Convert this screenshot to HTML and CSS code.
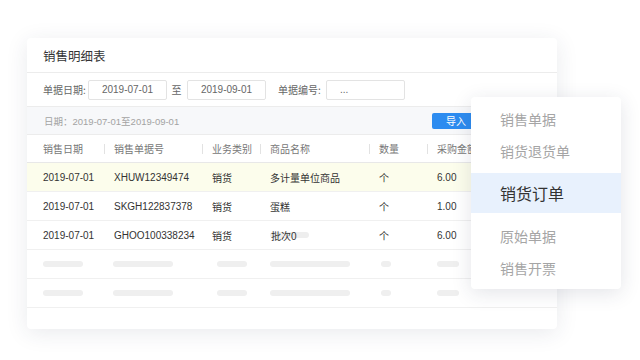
FILE: index.html
```html
<!DOCTYPE html>
<html lang="zh-CN">
<head>
<meta charset="utf-8">
<title>销售明细表</title>
<link rel="stylesheet" href="styles.css">
</head>
<body>
<div class="stage">
  <div class="card">
    <div class="title">销售明细表</div>
    <div class="filters">
      <span class="label">单据日期:</span>
      <div class="input center">2019-07-01</div>
      <span class="to">至</span>
      <div class="input center">2019-09-01</div>
      <span class="label label2">单据编号:</span>
      <div class="input left">...</div>
    </div>
    <div class="band">
      <span class="range">日期：2019-07-01至2019-09-01</span>
      <button class="import">导入</button>
    </div>
    <div class="row head">
      <div class="cell">销售日期</div>
      <div class="cell sep">销售单据号</div>
      <div class="cell sep">业务类别</div>
      <div class="cell sep">商品名称</div>
      <div class="cell sep">数量</div>
      <div class="cell sep">采购金额</div>
    </div>
    <div class="row hl">
      <div class="cell">2019-07-01</div>
      <div class="cell">XHUW12349474</div>
      <div class="cell">销货</div>
      <div class="cell">多计量单位商品</div>
      <div class="cell">个</div>
      <div class="cell">6.00</div>
    </div>
    <div class="row">
      <div class="cell">2019-07-01</div>
      <div class="cell">SKGH122837378</div>
      <div class="cell">销货</div>
      <div class="cell">蛋糕</div>
      <div class="cell">个</div>
      <div class="cell">1.00</div>
    </div>
    <div class="row">
      <div class="cell">2019-07-01</div>
      <div class="cell">GHOO100338234</div>
      <div class="cell">销货</div>
      <div class="cell"><span class="pilltext"><span class="pill"></span><span class="ptxt">批次0</span></span></div>
      <div class="cell">个</div>
      <div class="cell">6.00</div>
    </div>
    <div class="row sk">
      <div class="cell"><span class="bar w40"></span></div>
      <div class="cell"><span class="bar w60"></span></div>
      <div class="cell"><span class="bar w30 in5"></span></div>
      <div class="cell"><span class="bar w80"></span></div>
      <div class="cell"><span class="bar w10 in2"></span></div>
      <div class="cell"><span class="bar w22"></span></div>
    </div>
    <div class="row sk">
      <div class="cell"><span class="bar w40"></span></div>
      <div class="cell"><span class="bar w60"></span></div>
      <div class="cell"><span class="bar w30 in5"></span></div>
      <div class="cell"><span class="bar w80"></span></div>
      <div class="cell"><span class="bar w10 in2"></span></div>
      <div class="cell"><span class="bar w22"></span></div>
    </div>
  </div>

  <div class="menu">
    <div class="item">销售单据</div>
    <div class="item">销货退货单</div>
    <div class="item active">销货订单</div>
    <div class="item gap">原始单据</div>
    <div class="item">销售开票</div>
  </div>
</div>
</body>
</html>
```

FILE: styles.css
```css
* { box-sizing: border-box; }
html, body { margin: 0; padding: 0; background: #ffffff; }
body {
  font-family: "Liberation Sans", "Noto Sans CJK SC", sans-serif;
  width: 640px;
  height: 360px;
  overflow: hidden;
}
.stage {
  position: relative;
  padding: 38px 0 0 27px;
}
.card {
  width: 530px;
  height: 291px;
  background: #fff;
  border-radius: 4px;
  box-shadow: 0 4px 22px rgba(40, 50, 80, 0.10);
  overflow: hidden;
}
.title {
  height: 35px;
  padding-left: 16px;
  display: flex;
  align-items: center;
  font-size: 12.5px;
  color: #333;
  border-bottom: 1px solid #ececec;
  font-family: "Noto Sans CJK SC", sans-serif;
}
.filters {
  height: 34px;
  display: flex;
  align-items: center;
  padding-left: 16px;
  border-bottom: 1px solid #ececec;
  font-size: 10px;
  color: #666;
}
.label { width: 45px; font-family: "Noto Sans CJK SC", sans-serif; }
.label2 { margin-left: 12px; width: 48px; }
.to { width: 21px; text-align: center; margin: 0 0 0 -1px; font-family: "Noto Sans CJK SC", sans-serif; }
.input {
  width: 79px;
  height: 20px;
  border: 1px solid #e3e3e3;
  border-radius: 2px;
  display: flex;
  align-items: center;
  color: #666;
  font-size: 10px;
}
.input.center { justify-content: center; }
.input.left { padding-left: 13px; }
.band {
  height: 28px;
  background: #f7f8fa;
  border-bottom: 1px solid #ececec;
  display: flex;
  align-items: center;
  padding-left: 17px;
  font-size: 9.5px;
  color: #a3a3a3;
}
.import {
  margin-left: auto;
  margin-right: 77px;
  width: 48px;
  height: 16px;
  border: 0;
  border-radius: 2px;
  background: #2d8cf0;
  color: #fff;
  font-family: "Noto Sans CJK SC", sans-serif;
  font-size: 10px;
  padding: 0;
  line-height: 16px;
}
.row {
  display: grid;
  grid-template-columns: 71px 98px 58px 109px 58px 1fr;
  padding-left: 16px;
  height: 29px;
  align-items: center;
  border-bottom: 1px solid #f0f0f0;
  font-size: 10px;
  color: #333;
}
.row.head {
  height: 28px;
  color: #777;
  border-bottom: 1px solid #e8e8e8;
}
.row.hl { background: #fcfdec; }
.cell { position: relative; white-space: nowrap; }
.head .cell { font-family: "Noto Sans CJK SC", sans-serif; }
.cell.sep::before {
  content: "";
  position: absolute;
  left: -10px;
  top: 50%;
  margin-top: -5px;
  width: 1px;
  height: 10px;
  background: #e2e2e2;
}
.pilltext { position: relative; display: inline-block; padding-left: 1px; }
.pill {
  position: absolute;
  left: 0;
  top: 50%;
  margin-top: -3px;
  width: 39px;
  height: 6px;
  border-radius: 3px;
  background: #eeeeee;
}
.ptxt { position: relative; }
.bar {
  display: block;
  height: 6px;
  border-radius: 3px;
  background: #efefef;
}
.w40 { width: 40px; }
.w60 { width: 60px; margin-left: -1px; }
.w30 { width: 30px; }
.w80 { width: 80px; }
.w10 { width: 10px; }
.w22 { width: 22px; }
.in5 { margin-left: 5px; }
.in2 { margin-left: 2px; }

.menu {
  position: absolute;
  left: 471px;
  top: 97px;
  width: 150px;
  height: 192px;
  background: #fff;
  border-radius: 4px;
  box-shadow: 0 4px 20px rgba(40, 50, 80, 0.13);
  padding-top: 6px;
  font-family: "Noto Sans CJK SC", sans-serif;
}
.item {
  height: 32px;
  display: flex;
  align-items: center;
  padding-left: 29px;
  font-size: 14px;
  color: #a5a5a5;
}
.item.active {
  height: 40px;
  margin-top: 6px;
  background: #e8f1fd;
  color: #333;
  font-size: 16px;
}
.item.gap { margin-top: 7px; }
```
